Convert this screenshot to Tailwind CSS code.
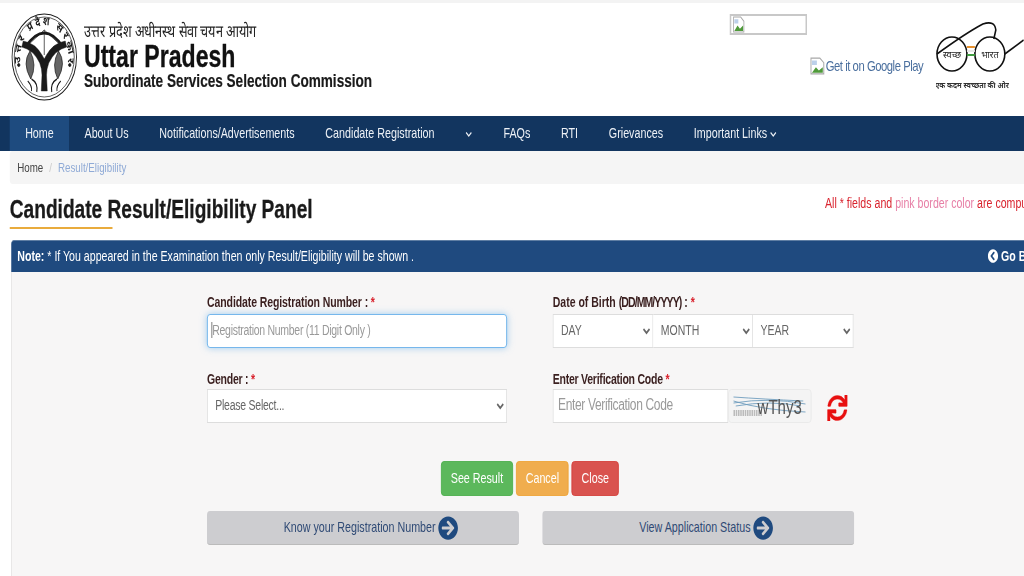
<!DOCTYPE html>
<html lang="en">
<head>
<meta charset="utf-8">
<title>Candidate Result/Eligibility Panel</title>
<script src="https://cdn.jsdelivr.net/npm/@tailwindcss/browser@4"></script>
</head>
<body class="bg-white overflow-hidden h-[576px] w-[1024px]">
<!-- the reference is a 1365px wide page squeezed to 1024, so the whole page is squeezed the same way -->
<div class="w-[1410px] h-[576px] origin-top-left scale-x-[0.75] font-['Liberation_Sans',Arial,sans-serif] text-[14.3px] text-[#333]">

    <header class="flex h-[116px] border-t-[3px] border-[#f3f3f3]">
        <div class="flex w-[973px] pl-[15px] pt-[10px]">
            <svg class="w-[88px] h-[88px] shrink-0" viewBox="0 0 88 88" fill="none" stroke="#1a1a1a">
                <circle cx="44" cy="44" r="43" stroke-width="1.2"/>
                <circle cx="44" cy="44" r="40" stroke-width="0.8"/>
                <path d="M19 34 Q44 6 69 34" stroke-width="3"/>
                <path d="M21 33 L44 17 L67 33 M44 17 V42" stroke-width="0.8"/>
                <path d="M16 28 Q32 30 41 42 L44 46 L47 42 Q56 30 72 28 L74 34 Q58 37 50 50 Q47 56 47 62 L48 78 H40 L41 62 Q41 56 38 50 Q30 37 14 34 Z" fill="#1a1a1a" stroke-width="0.5"/>
                <path d="M25 38 Q14 50 26 66 Q35 52 25 38 Z M63 38 Q74 50 62 66 Q53 52 63 38 Z" fill="#666" stroke-width="0.8"/>
                <path d="M27 66 Q36 70 34 79 M61 66 Q52 70 54 79 M22 68 Q28 73 27 78 M66 68 Q60 73 61 78" stroke-width="1.4"/>
                <circle cx="10" cy="52" r="1.500" fill="#1a1a1a"/>
                <circle cx="78" cy="52" r="1.500" fill="#1a1a1a"/>
                <path id="emblem-arc" d="M13 52 A32 32 0 1 1 75 52" stroke="none"/>
                <text font-family="'Noto Sans','Liberation Sans',sans-serif" font-size="11.5" font-weight="700" fill="#1a1a1a" stroke="none"><textPath href="#emblem-arc" textLength="112" startOffset="2">उत्तर प्रदेश सरकार</textPath></text>
            </svg>
            <div class="ml-[9px] pt-[8px]">
                <p class="text-[16.9px] leading-[21px] text-[#222]">उत्तर प्रदेश अधीनस्थ सेवा चयन आयोग</p>
                <p class="text-[30.8px] leading-[30px] font-bold text-[#111] [-webkit-text-stroke:0.3px_#111]">Uttar Pradesh</p>
                <p class="text-[18.1px] leading-[20px] font-bold text-[#1a1a1a] -mt-[1px] [-webkit-text-stroke:0.2px_#1a1a1a]">Subordinate Services Selection Commission</p>
            </div>
        </div>
        <div class="w-[275px] pt-[11px] flex">
            <div class="w-[103px] h-[21px] border-2 border-[#c8c8c8] shrink-0 pl-[2px]">
                <svg class="w-[17px] h-[17px]" viewBox="0 0 16 16"><path d="M1 1h9l4 4v10H1z" fill="#fff" stroke="#a8a8a8"/><path d="M2 14l4-5 3 3 4-3v5z" fill="#4f9a3a"/><path d="M2 3h5v4H2z" fill="#bcd0ea"/></svg>
            </div>
            <a class="flex items-center ml-[4px] mt-[42px] h-[20px] text-[15px] text-[#4a6f9e] whitespace-nowrap tracking-[-0.6px]">
                <svg class="w-[21px] h-[18px] shrink-0" viewBox="0 0 16 16" preserveAspectRatio="none"><path d="M1 1h9l4 4v10H1z" fill="#fff" stroke="#a8a8a8"/><path d="M2 14l4-5 3 3 4-3v5z" fill="#4f9a3a"/><path d="M2 3h5v4H2z" fill="#bcd0ea"/></svg>Get it on Google Play</a>
        </div>
        <svg class="w-[117px] h-[85px] mt-[12px] shrink-0" viewBox="0 0 88 85" preserveAspectRatio="none" fill="none" stroke="#111" stroke-width="1.6">
            <ellipse cx="16" cy="39" rx="15" ry="17"/>
            <ellipse cx="54" cy="39" rx="15" ry="17"/>
            <path d="M1 39 Q30 18 47 9 Q59 5 60 15 L58 24"/>
            <path d="M69 39 L88 25"/>
            <path d="M31 32 H39" stroke="#e8912d" stroke-width="2"/>
            <path d="M31 36 H39" stroke="#e9e9e9" stroke-width="2"/>
            <path d="M31 40 H39" stroke="#3f9b3f" stroke-width="2"/>
            <text x="16" y="43" text-anchor="middle" font-family="'Noto Sans','Liberation Sans',sans-serif" font-size="9" fill="#222" stroke="none">स्वच्छ</text>
            <text x="54" y="43" text-anchor="middle" font-family="'Noto Sans','Liberation Sans',sans-serif" font-size="9" fill="#222" stroke="none">भारत</text>
            <text x="36" y="73" text-anchor="middle" font-family="'Noto Sans','Liberation Sans',sans-serif" font-size="7.200" font-weight="700" fill="#333" stroke="none">एक कदम स्वच्छता की ओर</text>
        </svg>
    </header>

    <nav class="flex h-[35px] bg-[#12355f] text-[#eef2f7] pl-[13px] leading-[35px] whitespace-nowrap">
        <a class="px-[20.5px] bg-[#1e4b7f]">Home</a>
        <a class="px-[20.5px]">About Us</a>
        <a class="px-[20.5px]">Notifications/Advertisements</a>
        <a class="px-[20.5px]">Candidate Registration</a>
        <a class="px-[20.5px] flex items-center">
            <svg class="w-[10px] h-[10px]" viewBox="0 0 10 10" fill="none" stroke="#eef2f7" stroke-width="1.5"><path d="M1.500 3.500 5 7l3.500-3.500"/></svg>
        </a>
        <a class="px-[20.5px]">FAQs</a>
        <a class="px-[20.5px]">RTI</a>
        <a class="px-[20.5px]">Grievances</a>
        <a class="px-[20.5px] flex items-center gap-[3px]">Important Links
            <svg class="w-[10px] h-[10px]" viewBox="0 0 10 10" fill="none" stroke="#eef2f7" stroke-width="1.5"><path d="M1.500 3.500 5 7l3.500-3.500"/></svg>
        </a>
    </nav>

    <div class="ml-[13px] h-[33px] bg-[#f5f5f5] rounded-sm flex items-center pl-[10px] text-[13px] leading-[33px]">
        <span class="text-[#444]">Home</span>
        <span class="text-[#ccc] px-[8px]">/</span>
        <span class="text-[#8faad6]">Result/Eligibility</span>
    </div>

    <div class="flex h-[56px] pl-[13px]">
        <div class="w-[1087px]">
            <h1 class="text-[25.5px] leading-[28px] font-bold text-[#1a1a1a] mt-[11px] [-webkit-text-stroke:0.3px_#1a1a1a]">Candidate Result/Eligibility Panel</h1>
            <div class="w-[137px] h-[2px] bg-[#e9ab3c] mt-[4px]"></div>
        </div>
        <p class="pt-[11px] leading-[16px] text-[14.15px] whitespace-nowrap text-[#d9232e]">All * fields and <span class="text-[#e77fa6]">pink border color</span> are compulsory</p>
    </div>

    <div class="ml-[15px] h-[32px] bg-[#1f4a7f] rounded-t-sm flex items-center justify-between pl-[8px] pr-[18px] text-[14.15px] text-white border-t border-[#5f7ea3]">
        <p><b>Note:</b> * If You appeared in the Examination then only Result/Eligibility will be shown .</p>
        <a class="flex items-center gap-[4px] font-bold">
            <svg class="w-[14px] h-[14px]" viewBox="0 0 512 512" fill="#fff"><path d="M256 504C119 504 8 393 8 256S119 8 256 8s248 111 248 248-111 248-248 248zM142.100 273l135.500 135.500c9.400 9.400 24.600 9.400 33.900 0l17-17c9.400-9.400 9.400-24.600 0-33.900L226.900 256l101.600-101.600c9.400-9.400 9.400-24.600 0-33.900l-17-17c-9.400-9.400-24.600-9.400-33.900 0L142.100 239c-9.400 9.400-9.400 24.600 0 34z"/></svg>
            Go Back
        </a>
    </div>

    <main class="ml-[15px] h-[304px] bg-[#f7f6f6] border-l border-[#e2e2e2] pt-[22px] pl-[260px]">
        <div class="w-[861px]">
            <div class="grid grid-cols-[400px_400px] gap-x-[61px] gap-y-[21px] text-[14px]">
                <div>
                    <label class="block h-[20px] leading-[16px] font-bold tracking-[-0.125px] text-[#3a1f1f]">Candidate Registration Number : <span class="text-[#d9232e]">*</span></label>
                    <div class="relative">
                        <input class="block w-full h-[34px] pb-[2px] bg-white border border-[#66afe9] shadow-[0_0_8px_rgba(102,175,233,0.6)] rounded-sm px-[6px] tracking-[-0.38px] placeholder:text-[#999]" placeholder="Registration Number (11 Digit Only )">
                        <span class="absolute left-[6px] top-[8px] w-[1px] h-[16px] bg-[#555]"></span>
                    </div>
                </div>
                <div>
                    <label class="block h-[20px] leading-[16px] font-bold text-[#3a1f1f]">Date of Birth <span class="tracking-[-1.2px]">(DD/MM/YYYY)</span> : <span class="text-[#d9232e]">*</span></label>
                    <div class="grid grid-cols-[134px_133px_134px] h-[34px]">
                        <select class="h-full pb-[2px] bg-white border border-[#ddd] px-[6px] text-[#666]"><option>DAY</option></select>
                        <select class="h-full pb-[2px] bg-white border-y border-r border-[#ddd] px-[6px] text-[#666]"><option>MONTH</option></select>
                        <select class="h-full pb-[2px] bg-white border-y border-r border-[#ddd] px-[6px] text-[#666]"><option>YEAR</option></select>
                    </div>
                </div>
                <div>
                    <label class="block h-[20px] pt-[2px] leading-[16px] font-bold tracking-[-0.3px] text-[#3a1f1f]">Gender : <span class="text-[#d9232e]">*</span></label>
                    <select class="block w-full h-[34px] pb-[2px] bg-white border border-[#ddd] px-[6px] tracking-[-0.33px] text-[#666]"><option>Please Select...</option></select>
                </div>
                <div>
                    <label class="block h-[20px] pt-[2px] leading-[16px] font-bold tracking-[-0.32px] text-[#3a1f1f]">Enter Verification Code <span class="text-[#d9232e]">*</span></label>
                    <div class="flex h-[34px] items-center">
                        <input class="w-[234px] h-full pb-[2px] bg-white border border-[#ddd] px-[6px] text-[16px] tracking-[-0.46px] placeholder:text-[#999]" placeholder="Enter Verification Code">
                        <div class="relative w-[111px] h-full bg-[#f4f4f4] border border-[#e8e8e8] rounded-sm overflow-hidden flex items-center justify-end pr-[12px] text-[20px] pt-[2px] text-[#555]">
                            <svg class="absolute left-[4px] top-[4px] w-[100px] h-[24px]" viewBox="0 0 100 24" fill="none" stroke="#6d9bbd"><path d="M2 3 Q40 5 95 7 M2 7 Q40 16 98 18 M5 12 Q50 6 92 12 M2 9 Q50 3 98 10"/><path d="M2 19 H40" stroke="#bbb" stroke-dasharray="2 1" stroke-width="6"/></svg>
                            <span class="relative">wThy3</span>
                        </div>
                        <svg class="w-[27px] h-[26px] ml-[21px] mt-[4px]" viewBox="0 0 512 512" preserveAspectRatio="none" fill="#e81010" stroke="#e81010" stroke-width="8"><path d="M440.650 12.570l4 82.770A247.160 247.160 0 0 0 255.830 8C134.730 8 33.910 94.920 12.290 209.820A12 12 0 0 0 24.090 224h49.050a12 12 0 0 0 11.670-9.260 175.910 175.910 0 0 1 317-56.940l-101.460-4.860a12 12 0 0 0-12.570 12v47.410a12 12 0 0 0 12 12H500a12 12 0 0 0 12-12V12a12 12 0 0 0-12-12h-47.370a12 12 0 0 0-11.980 12.570zM255.830 432a175.610 175.610 0 0 1-146-77.800l101.800 4.870a12 12 0 0 0 12.570-12v-47.400a12 12 0 0 0-12-12H12a12 12 0 0 0-12 12V500a12 12 0 0 0 12 12h47.350a12 12 0 0 0 12-12.600l-4.150-82.570A247.170 247.170 0 0 0 255.830 504c121.110 0 221.930-86.920 243.550-201.820a12 12 0 0 0-11.800-14.180h-49.050a12 12 0 0 0-11.670 9.260A175.860 175.860 0 0 1 255.830 432z"/></svg>
                    </div>
                </div>
            </div>

            <div class="flex justify-center gap-[4px] mt-[38px]">
                <button class="h-[35px] px-[12px] bg-[#5cb85c] border border-[#4cae4c] rounded-sm text-white">See Result</button>
                <button class="h-[35px] px-[12px] bg-[#f0ad4e] border border-[#eea236] rounded-sm text-white">Cancel</button>
                <button class="h-[35px] px-[12px] bg-[#d9534f] border border-[#d43f3a] rounded-sm text-white">Close</button>
            </div>

            <div class="flex gap-[31px] mt-[15px] w-[863px]">
                <a class="flex-1 h-[34px] pl-[21px] bg-[#cdcdd0] border-b border-[#bbb] rounded-sm flex items-center justify-center gap-[3px] text-[#2f4a75]">
                    Know your Registration Number
                    <svg class="w-[27px] h-[24px]" viewBox="0 0 512 512" preserveAspectRatio="none" fill="#1f4a7f"><path d="M256 8c137 0 248 111 248 248S393 504 256 504 8 393 8 256 119 8 256 8zm-28.900 143.600l75.500 72.400H120c-13.300 0-24 10.700-24 24v16c0 13.300 10.700 24 24 24h182.600l-75.500 72.400c-9.700 9.300-9.900 24.800-.4 34.300l11 10.900c9.400 9.400 24.600 9.400 33.900 0L404.300 273c9.400-9.400 9.400-24.600 0-33.900L271.600 106.300c-9.400-9.400-24.600-9.400-33.900 0l-11 10.900c-9.300 9.600-9.100 25.100.4 34.400z"/></svg>
                </a>
                <a class="flex-1 h-[34px] pl-[21px] bg-[#cdcdd0] border-b border-[#bbb] rounded-sm flex items-center justify-center gap-[3px] text-[#2f4a75]">
                    View Application Status
                    <svg class="w-[27px] h-[24px]" viewBox="0 0 512 512" preserveAspectRatio="none" fill="#1f4a7f"><path d="M256 8c137 0 248 111 248 248S393 504 256 504 8 393 8 256 119 8 256 8zm-28.900 143.600l75.500 72.400H120c-13.300 0-24 10.700-24 24v16c0 13.300 10.700 24 24 24h182.600l-75.500 72.400c-9.700 9.300-9.900 24.800-.4 34.300l11 10.900c9.400 9.400 24.600 9.400 33.900 0L404.300 273c9.400-9.400 9.400-24.600 0-33.900L271.600 106.300c-9.400-9.400-24.600-9.400-33.900 0l-11 10.900c-9.300 9.600-9.100 25.100.4 34.400z"/></svg>
                </a>
            </div>
        </div>
    </main>
</div>
</body>
</html>
